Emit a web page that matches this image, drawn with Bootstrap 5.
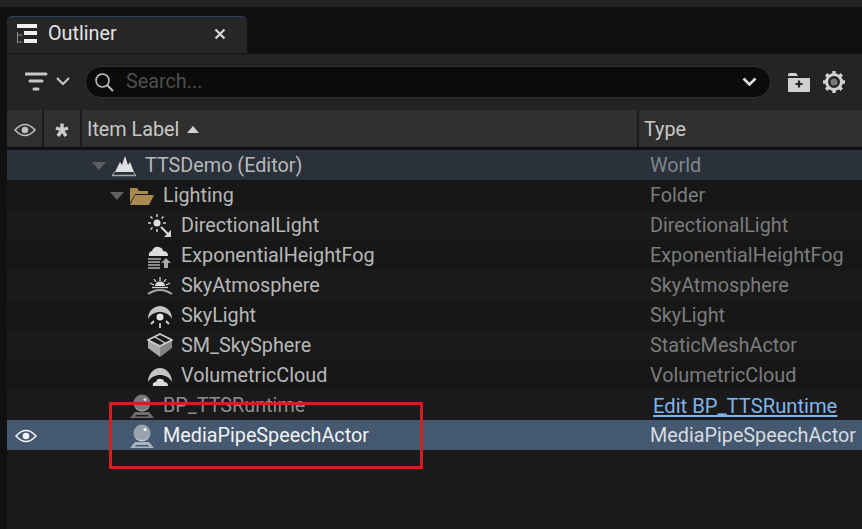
<!DOCTYPE html>
<html lang="en">
<head>
  <meta charset="UTF-8">
  <title>Outliner</title>
  <link href="https://cdn.jsdelivr.net/npm/bootstrap@5.3.6/dist/css/bootstrap.min.css" rel="stylesheet">
  <style>
    html, body { height: 100%; overflow: hidden; }
    body { background: #101010; font-family: Roboto, sans-serif; font-size: 19.8px; color: #c0c0c0; position: relative; }
    .top-strip { height: 7px; background: #232323; }
    .gap-strip { height: 9px; background: #101010; }
    .panel { margin-left: 7px; width: 855px; height: 513px; display: flex; flex-direction: column; }
    .tab-row { height: 37px; flex: none; }
    .ue-tab { width: 240px; height: 37px; background: #262626; border-radius: 5px 5px 0 0; border-top: 1px solid #2f4258; padding: 0 21px 3px 9px; color: #e4e4e4; }
    .ue-tab .tab-title { margin-left: 10px; }
    .ue-toolbar { height: 57px; flex: none; background: #242424; border-top: 1px solid #161616; padding: 0 16px 1px 18px; }
    .search-box { width: 686px; height: 32px; margin-left: 15px; margin-right: 17px; background: #0b0b0b; border: 1px solid #2f2f2f; border-radius: 16px; padding: 0 13px 0 8px; color: #4e4e4e; }
    .search-box span { margin-left: 12px; flex: 1; }
    .head-row { height: 37px; flex: none; background: #2f2f2f; color: #c8c8c8; }
    .head-cell { height: 100%; border-right: 2px solid #1b1b1b; padding-top: 2px; }
    .col-eye { width: 37px; flex: none; }
    .col-star { width: 38px; flex: none; }
    .col-label { width: 557px; flex: none; padding-left: 5px; }
    .col-kind { flex: 1; border-right: 0; padding-left: 5px; }
    .tree-body { flex: 1; background: #1a1a1a; border-top: 3px solid #101010; }
    .tree-row { height: 30px; color: #b8b8b8; padding-top: 2px; }
    .tree-row:nth-child(even) { background: #171717; }
    .tree-row.is-world { background: #2a313a; }
    .tree-row.is-dim .row-name { color: #8e8e8e; }
    .tree-row.is-picked { background: #44586f; color: #f2f2f2; }
    .eye-slot { width: 37px; flex: none; }
    .name-slot { width: 606px; flex: none; white-space: nowrap; }
    .indent-1 { padding-left: 48px; }
    .indent-2 { padding-left: 66px; }
    .indent-3 { padding-left: 103px; }
    .indent-4 { padding-left: 86px; }
    .row-icon { flex: none; margin-right: 9px; }
    .indent-3 .row-icon { margin-right: 8px; }
    .caret-down { width: 0; height: 0; flex: none; border-left: 7px solid transparent; border-right: 7px solid transparent; border-top: 8px solid #5f5f5f; margin-right: 6px; }
    .kind-slot { color: #7c7c7c; white-space: nowrap; }
    .tree-row.is-world .kind-slot { color: #80868d; }
    .tree-row.is-picked .kind-slot { color: #d6dbe1; }
    .edit-link { color: #7fb6f0; text-decoration: underline; margin-left: 3px; font-size: 20.2px; }
    .red-mark { position: absolute; left: 109px; top: 402px; width: 314px; height: 67px; border: 3px solid #cc2222; pointer-events: none; }
  </style>
</head>
<body>
  <div class="top-strip"></div>
  <div class="gap-strip"></div>
  <div class="panel">
    <div class="tab-row d-flex">
      <div class="ue-tab d-flex align-items-center">
        <svg width="22" height="22" viewBox="0 0 22 22"><path d="M1 1h20v4H1zM8 8h13v4H8zM8 16h13v4H8z" fill="#f0f0f0"/><path d="M1.500 9v11M1.500 12h5M1.500 19h5" stroke="#8a8a8a" fill="none"/></svg>
        <span class="tab-title flex-grow-1">Outliner</span>
        <svg width="12" height="12" viewBox="0 0 12 12"><path d="M1.500 1.500l9 9M10.500 1.500l-9 9" stroke="#d8d8d8" stroke-width="2.200"/></svg>
      </div>
    </div>
    <div class="ue-toolbar d-flex align-items-center">
      <svg width="23" height="20" viewBox="0 0 23 20"><path d="M1 2h20M5 9h12M9 17h4" stroke="#c8c8c8" stroke-width="3" stroke-linecap="round" fill="none"/></svg>
      <svg width="14" height="9" viewBox="0 0 14 9" class="ms-2"><path d="M1 1l6 6 6-6" stroke="#c8c8c8" stroke-width="2" fill="none"/></svg>
      <div class="search-box d-flex align-items-center">
        <svg width="20" height="20" viewBox="0 0 20 20"><circle cx="8.500" cy="8.500" r="6.500" stroke="#c0c0c0" stroke-width="1.600" fill="none"/><path d="M13 13l6 6" stroke="#c0c0c0" stroke-width="1.800"/></svg>
        <span>Search...</span>
        <svg width="15" height="10" viewBox="0 0 15 10"><path d="M1.500 1.500l6 6 6-6" stroke="#e0e0e0" stroke-width="2.600" fill="none"/></svg>
      </div>
      <svg width="22" height="20" viewBox="0 0 22 20"><path d="M0 3q0-2 2-2h6l2 3H0zM0 6h22v13q0 1-1 1H1q-1 0-1-1z" fill="#d0d0d0"/><path d="M11 8.500v7M7.500 12h7" stroke="#222" stroke-width="2.200"/></svg>
      <svg width="24" height="24" viewBox="0 0 24 24" class="ms-auto"><circle cx="12" cy="12" r="7.500" fill="none" stroke="#d0d0d0" stroke-width="3"/><circle cx="12" cy="12" r="3.500" fill="#777"/><path d="M12 1v4M12 19v4M1 12h4M19 12h4M4.200 4.200l3 3M16.800 16.800l3 3M19.800 4.200l-3 3M7.200 16.800l-3 3" stroke="#d0d0d0" stroke-width="3.400"/></svg>
    </div>
    <div class="head-row d-flex">
      <div class="head-cell col-eye d-flex align-items-center justify-content-center">
        <svg width="22" height="14" viewBox="0 0 22 14"><path d="M1 7q10-11 20 0q-10 11-20 0z" fill="none" stroke="#c0c0c0" stroke-width="1.500"/><circle cx="11" cy="7" r="3.300" fill="#c0c0c0"/></svg>
      </div>
      <div class="head-cell col-star d-flex align-items-center justify-content-center">
        <svg width="14" height="14" viewBox="0 0 14 14"><path d="M7 7V0.500M7 7L1 5M7 7l6-2M7 7l-4 6M7 7l4 6" stroke="#cccccc" stroke-width="3.400"/></svg>
      </div>
      <div class="head-cell col-label d-flex align-items-center">Item Label
        <svg width="12" height="7" viewBox="0 0 12 7" class="ms-2"><path d="M6 0l6 7H0z" fill="#d0d0d0"/></svg>
      </div>
      <div class="head-cell col-kind d-flex align-items-center">Type</div>
    </div>
    <div class="tree-body">
      <div class="tree-row is-world d-flex align-items-center">
        <div class="eye-slot"></div>
        <div class="name-slot indent-1 d-flex align-items-center">
          <span class="caret-down"></span>
          <svg class="row-icon" width="24" height="22" viewBox="0 0 24 22"><path d="M3 17L8 7l2 3 3-9 3 9 2-3 4 10z" fill="#e0e0e0"/><path d="M0 20.500h24" stroke="#a8a8a8" stroke-width="1.500"/><path d="M0 20.500l3-4M24 20.500l-3-4" stroke="#a8a8a8"/></svg>
          <span class="row-name">TTSDemo (Editor)</span>
        </div>
        <div class="kind-slot">World</div>
      </div>
      <div class="tree-row d-flex align-items-center">
        <div class="eye-slot"></div>
        <div class="name-slot indent-2 d-flex align-items-center">
          <span class="caret-down"></span>
          <svg class="row-icon" width="24" height="18" viewBox="0 0 24 18"><path d="M0 2q0-1 1-1h6l2 3h9v3H5L0 16z" fill="#a98a50"/><path d="M5 8h19l-5 10H0z" fill="#a98a50"/></svg>
          <span class="row-name">Lighting</span>
        </div>
        <div class="kind-slot">Folder</div>
      </div>
      <div class="tree-row d-flex align-items-center">
        <div class="eye-slot"></div>
        <div class="name-slot indent-3 d-flex align-items-center">
          <svg class="row-icon" width="26" height="26" viewBox="0 0 26 26"><circle cx="10" cy="10" r="3.500" fill="#e0e0e0"/><path d="M10 1v3M10 16v3M1 10h3M16 10h3M3.500 3.500l2 2M16.500 3.500l-2 2M3.500 16.500l2-2" stroke="#d0d0d0" stroke-width="1.500"/><path d="M14 14l8 8" stroke="#d8d8d8" stroke-width="2"/><path d="M24 24h-7l7-7z" fill="#d8d8d8"/></svg>
          <span class="row-name">DirectionalLight</span>
        </div>
        <div class="kind-slot">DirectionalLight</div>
      </div>
      <div class="tree-row d-flex align-items-center">
        <div class="eye-slot"></div>
        <div class="name-slot indent-3 d-flex align-items-center">
          <svg class="row-icon" width="26" height="26" viewBox="0 0 26 26"><path d="M2 13q-1-4 3-5q2-5 7-4q4 1 4 4q5 0 5 5z" fill="#dcdcdc"/><path d="M1 16h13M1 19h12M1 22h12M1 25h12" stroke="#b0b0b0" stroke-width="1.500"/><path d="M19 15l5 5h-3v5h-4v-5h-3z" fill="#a8a8a8"/></svg>
          <span class="row-name">ExponentialHeightFog</span>
        </div>
        <div class="kind-slot">ExponentialHeightFog</div>
      </div>
      <div class="tree-row d-flex align-items-center">
        <div class="eye-slot"></div>
        <div class="name-slot indent-3 d-flex align-items-center">
          <svg class="row-icon" width="26" height="26" viewBox="0 0 26 26"><path d="M8 13a5 4.500 0 0 1 10 0z" fill="#dcdcdc"/><path d="M13 4v4M7 6l2 3M19 6l-2 3M3 10l4 2M23 10l-4 2" stroke="#cfcfcf" stroke-width="1.300"/><path d="M5 14.500h16" stroke="#cfcfcf" stroke-width="1.300"/><path d="M1 21q12-8 24 0" stroke="#a8a8a8" stroke-width="2" fill="none"/></svg>
          <span class="row-name">SkyAtmosphere</span>
        </div>
        <div class="kind-slot">SkyAtmosphere</div>
      </div>
      <div class="tree-row d-flex align-items-center">
        <div class="eye-slot"></div>
        <div class="name-slot indent-3 d-flex align-items-center">
          <svg class="row-icon" width="26" height="26" viewBox="0 0 26 26"><path d="M1 16C1 8 7 3 13 3s12 5 12 13c-3-5-7-7-12-7s-9 2-12 7z" fill="#c4c4c4"/><circle cx="13" cy="14" r="3.500" fill="#e4e4e4"/><path d="M13 20v5M7 18l-3 3M19 18l3 3" stroke="#d0d0d0" stroke-width="1.800"/></svg>
          <span class="row-name">SkyLight</span>
        </div>
        <div class="kind-slot">SkyLight</div>
      </div>
      <div class="tree-row d-flex align-items-center">
        <div class="eye-slot"></div>
        <div class="name-slot indent-3 d-flex align-items-center">
          <svg class="row-icon" width="26" height="26" viewBox="0 0 26 26"><path d="M1 15l12 9V13L1 7z" fill="#a8a8a8"/><path d="M25 15l-12 9V13l12-6z" fill="#858585"/><path d="M13 1l12 6-12 6L1 7z" fill="none" stroke="#cfcfcf" stroke-width="1.600"/><path d="M8 4l10 6" stroke="#cfcfcf" stroke-width="1.400"/></svg>
          <span class="row-name">SM_SkySphere</span>
        </div>
        <div class="kind-slot">StaticMeshActor</div>
      </div>
      <div class="tree-row d-flex align-items-center">
        <div class="eye-slot"></div>
        <div class="name-slot indent-3 d-flex align-items-center">
          <svg class="row-icon" width="26" height="26" viewBox="0 0 26 26"><path d="M1 19C1 11 7 5 13 5s12 6 12 14c-3-5-7-7-12-7s-9 2-12 7z" fill="#c4c4c4"/><path d="M6 23q-1-4 3-4q1-4 5-3q3 0 3 3q4 0 4 4z" fill="#dcdcdc"/></svg>
          <span class="row-name">VolumetricCloud</span>
        </div>
        <div class="kind-slot">VolumetricCloud</div>
      </div>
      <div class="tree-row is-dim d-flex align-items-center">
        <div class="eye-slot"></div>
        <div class="name-slot indent-4 d-flex align-items-center">
          <svg class="row-icon" width="24" height="26" viewBox="0 0 24 26"><circle cx="12" cy="10" r="8.500" fill="#777"/><path d="M3.500 10a8.500 8.500 0 0 0 17 0a8.500 7 0 0 1-17 0z" fill="#9c9c9c"/><circle cx="15" cy="6.500" r="1.500" fill="#d8d8d8"/><path d="M5 19h14l5 6H0z" fill="#6e6e6e"/><path d="M6 22h12l1 1.500H5z" fill="#1a1a1a"/></svg>
          <span class="row-name">BP_TTSRuntime</span>
        </div>
        <div class="kind-slot"><span class="edit-link">Edit BP_TTSRuntime</span></div>
      </div>
      <div class="tree-row is-picked d-flex align-items-center">
        <div class="eye-slot d-flex align-items-center justify-content-center">
          <svg width="22" height="14" viewBox="0 0 22 14"><path d="M1 7q10-11 20 0q-10 11-20 0z" fill="none" stroke="#f4f4f4" stroke-width="1.500"/><circle cx="11" cy="7" r="3.300" fill="#f4f4f4"/></svg>
        </div>
        <div class="name-slot indent-4 d-flex align-items-center">
          <svg class="row-icon" width="24" height="26" viewBox="0 0 24 26"><circle cx="12" cy="10" r="8.500" fill="#98a2ae"/><path d="M3.500 10a8.500 8.500 0 0 0 17 0a8.500 7 0 0 1-17 0z" fill="#c4cad2"/><circle cx="15" cy="6.500" r="1.500" fill="#ffffff"/><path d="M5 19h14l5 6H0z" fill="#a9b4c0"/><path d="M6 22h12l1 1.500H5z" fill="#44586f"/></svg>
          <span class="row-name">MediaPipeSpeechActor</span>
        </div>
        <div class="kind-slot">MediaPipeSpeechActor</div>
      </div>
    </div>
  </div>
  <div class="red-mark"></div>
  <script src="https://cdn.jsdelivr.net/npm/bootstrap@5.3.6/dist/js/bootstrap.bundle.min.js"></script>
</body>
</html>
